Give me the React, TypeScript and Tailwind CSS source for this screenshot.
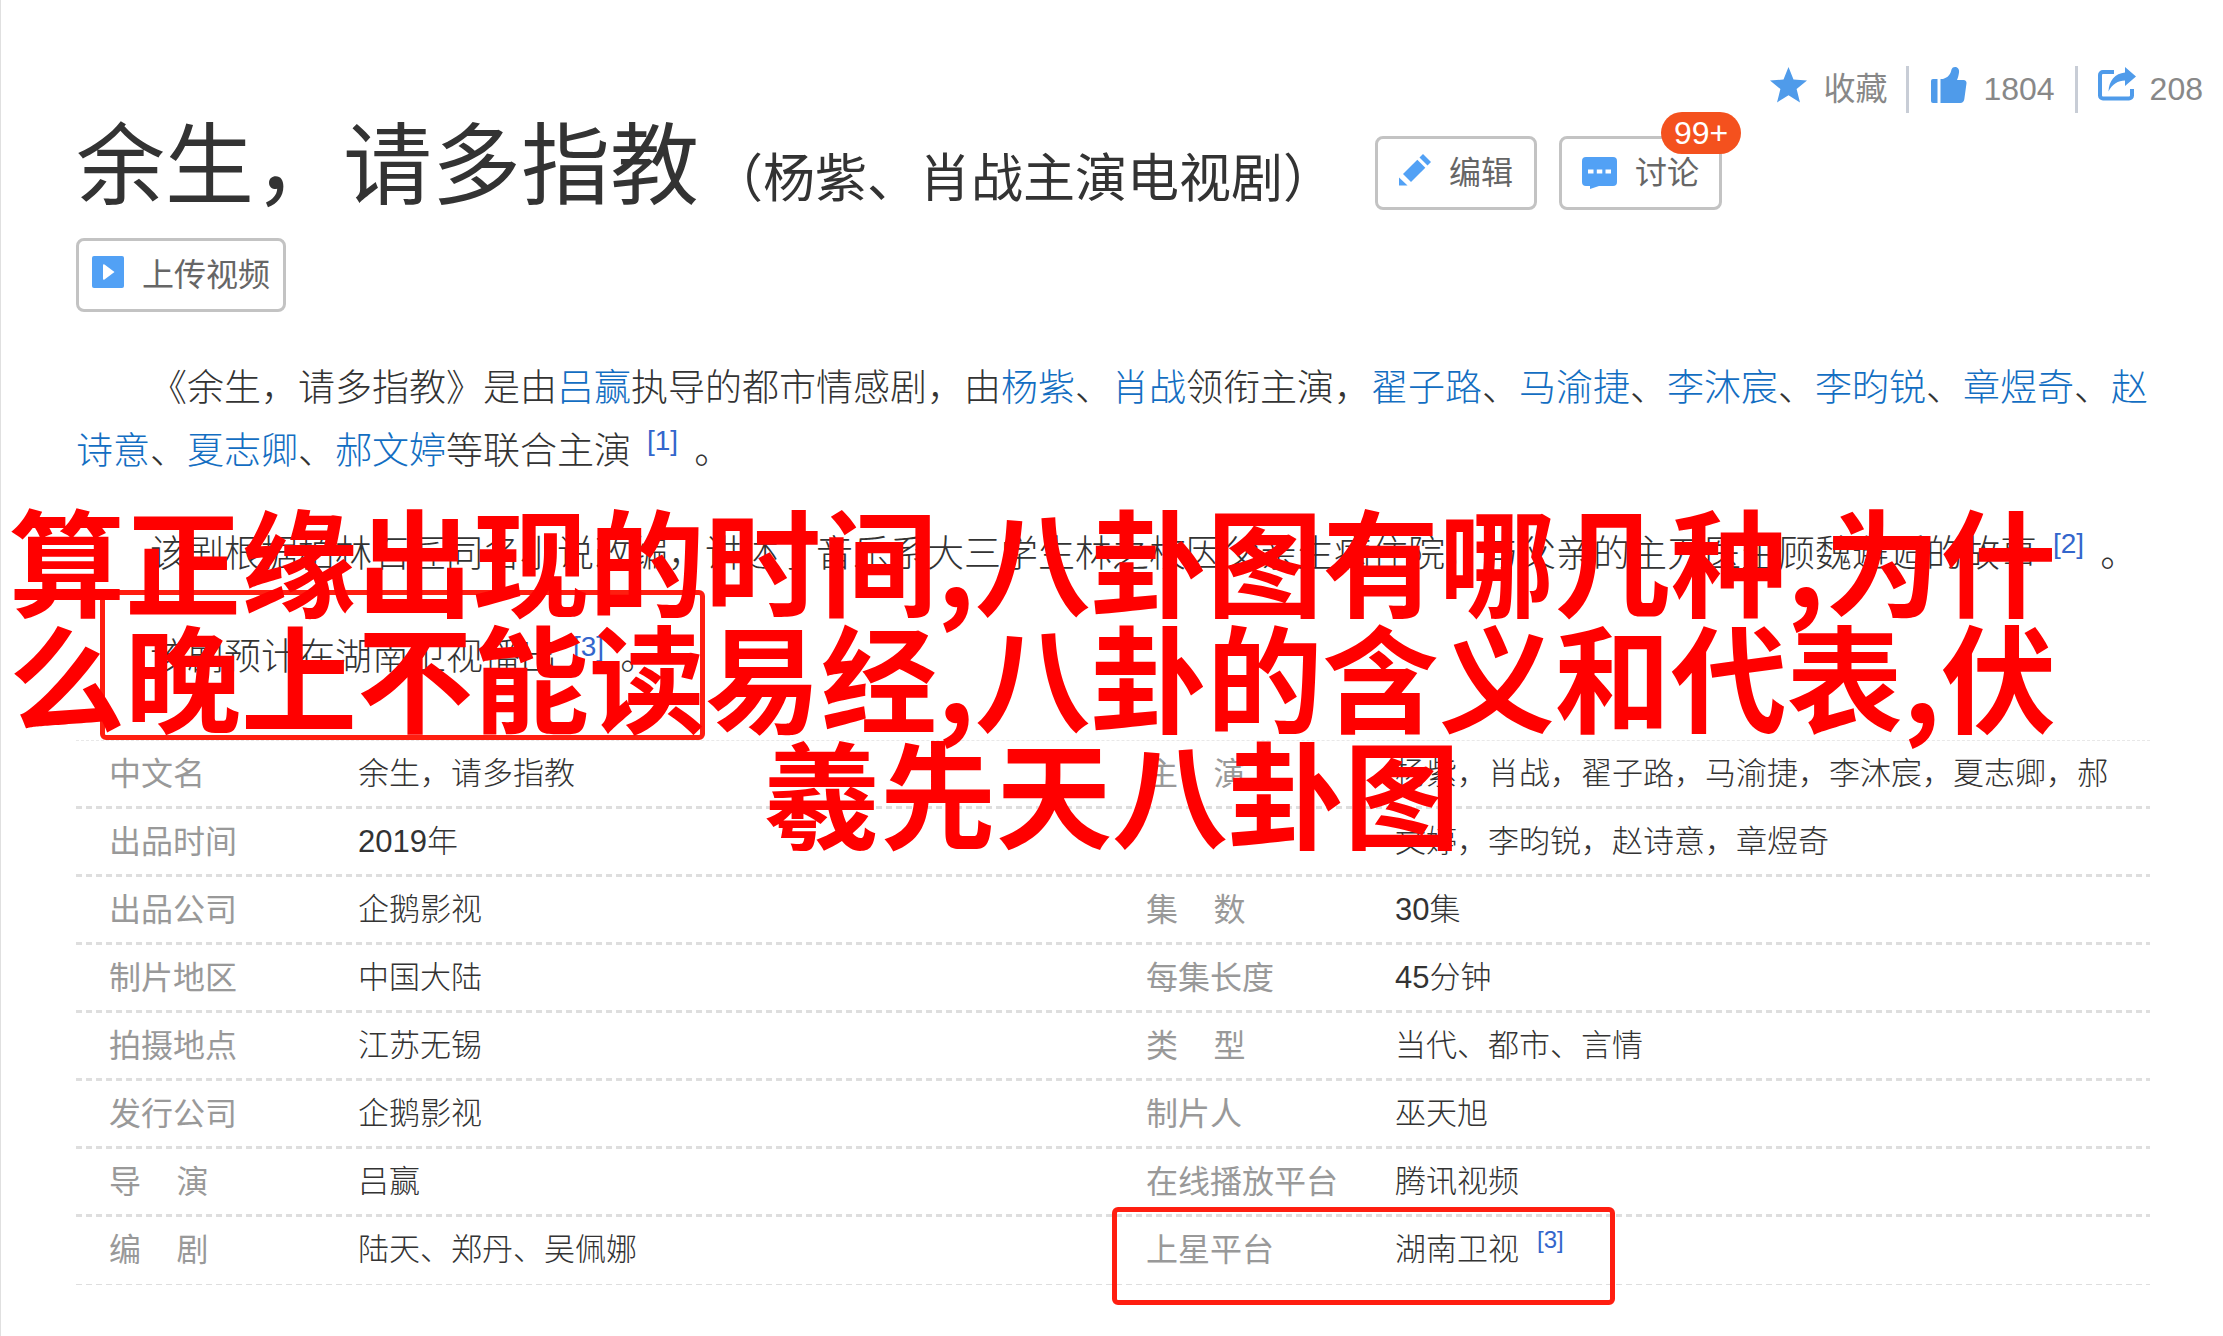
import type { ReactNode } from 'react';

const ROWS = [
  ['中文名', '余生，请多指教', '主\u00a0\u00a0\u00a0\u00a0演', '杨紫，肖战，翟子路，马渝捷，李沐宸，夏志卿，郝'],
  ['出品时间', '2019年', '', '文婷，李昀锐，赵诗意，章煜奇'],
  ['出品公司', '企鹅影视', '集\u00a0\u00a0\u00a0\u00a0数', '30集'],
  ['制片地区', '中国大陆', '每集长度', '45分钟'],
  ['拍摄地点', '江苏无锡', '类\u00a0\u00a0\u00a0\u00a0型', '当代、都市、言情'],
  ['发行公司', '企鹅影视', '制片人', '巫天旭'],
  ['导\u00a0\u00a0\u00a0\u00a0演', '吕赢', '在线播放平台', '腾讯视频'],
  ['编\u00a0\u00a0\u00a0\u00a0剧', '陆天、郑丹、吴佩娜', '上星平台', '湖南卫视'],
];

export default function App() {
  return (
    <div className="relative min-h-screen overflow-hidden border-l border-[#e0e0e0] bg-white pb-10 font-['Liberation_Sans','Noto_Sans_CJK_SC',sans-serif] text-[#333]">
      <Tools />

      <header className="mt-[9px] flex flex-wrap items-end gap-y-7 pl-[75px]">
        <h1 className="text-[89px] leading-[88px]">余生，请多指教</h1>
        <h2 className="ml-3 text-[52px] leading-[62px]">（杨紫、肖战主演电视剧）</h2>
        <ActionButton icon={<PencilIcon />} label="编辑" className="ml-10 gap-[18px] px-[21px]" />
        <div className="relative ml-[22px]">
          <ActionButton icon={<ChatIcon />} label="讨论" className="gap-[18px] px-5" />
          <span className="absolute -top-6 left-[102px] h-[42px] w-20 rounded-full bg-[#f4511e] text-center text-[32px] leading-[42px] text-white">
            99+
          </span>
        </div>
        <div className="w-full">
          <ActionButton icon={<PlayIcon />} label="上传视频" className="gap-[18px] px-[13px]" />
        </div>
      </header>

      <main className="pr-[73px] pl-[75px]">
        <Summary />
        <InfoTable />
      </main>

      <Overlay />
    </div>
  );
}

function Tools() {
  return (
    <nav className="flex items-center justify-end pt-[66px] pr-5 text-[32px] leading-[47px] text-[#888]">
      <button className="flex items-center gap-4">
        <StarIcon />
        收藏
      </button>
      <span className="mr-[22px] ml-[19px] h-[47px] w-[3px] bg-[#c8cdd6]" />
      <button className="flex items-center gap-4">
        <ThumbIcon />
        1804
      </button>
      <span className="mx-5 h-[47px] w-[3px] bg-[#c8cdd6]" />
      <button className="flex items-center gap-[14px]">
        <ShareIcon />
        208
      </button>
    </nav>
  );
}

function ActionButton({ icon, label, className }: { icon: ReactNode; label: string; className: string }) {
  return (
    <button
      className={`flex h-[74px] items-center rounded-lg border-3 border-[#c3c3c3] text-[32px] leading-[68px] whitespace-nowrap text-[#666] ${className}`}
    >
      {icon}
      {label}
    </button>
  );
}

function Name({ children }: { children: ReactNode }) {
  return (
    <a href="#" className="text-[#136ec2]">
      {children}
    </a>
  );
}

function Cite({ n }: { n: number }) {
  return (
    <sup className="mx-4 text-[28px] leading-none">
      <a href="#" className="text-[#3366cc]">
        [{n}]
      </a>
    </sup>
  );
}

function Summary() {
  return (
    <section className="relative mt-[45px] flex flex-col gap-10 text-[37px] leading-[63px] font-light">
      <p className="indent-[2em]">
        《余生，请多指教》是由<Name>吕赢</Name>执导的都市情感剧，由<Name>杨紫</Name>、<Name>肖战</Name>领衔主演，
        <Name>翟子路</Name>、<Name>马渝捷</Name>、<Name>李沐宸</Name>、<Name>李昀锐</Name>、<Name>章煜奇</Name>、
        <Name>赵诗意</Name>、<Name>夏志卿</Name>、<Name>郝文婷</Name>等联合主演
        <Cite n={1} />。
      </p>
      <p className="indent-[2em]">
        该剧根据柏林石匠同名小说改编，讲述了音乐系大三学生林之校因父亲生病住院，与父亲的主刀医生顾魏邂逅的故事
        <Cite n={2} />。
      </p>
      <p className="indent-[2em]">
        该剧预计在湖南卫视播出
        <Cite n={3} />。
      </p>
      <div className="absolute top-[233px] left-6 h-[150px] w-[605px] rounded-md border-5 border-[#ff1e10]" />
    </section>
  );
}

function InfoTable() {
  return (
    <div className="relative mt-[51px]">
      <table className="block">
        <tbody className="block border-t border-dashed border-[#e8e8e8]">
          {ROWS.map(([label, value, label2, value2]) => (
            <tr
              key={label}
              className="grid h-[68px] grid-cols-[282px_1fr_282px_1fr] bg-[repeating-linear-gradient(90deg,#dedede_0_6px,transparent_6px_10px)] bg-[length:100%_3px] bg-bottom bg-no-repeat text-left text-[31px] leading-[66px] whitespace-nowrap last:bg-[length:100%_1px]"
            >
              <Label>{label}</Label>
              <td className="font-light">{value}</td>
              <Label>{label2}</Label>
              <td className="font-light">
                {value2}
                {label2 === '上星平台' && (
                  <sup className="ml-[18px] text-[24px] leading-none">
                    <a href="#" className="text-[#3366cc]">
                      [3]
                    </a>
                  </sup>
                )}
              </td>
            </tr>
          ))}
        </tbody>
      </table>
      <div className="absolute top-[467px] left-1/2 -ml-px h-[98px] w-[503px] rounded-md border-5 border-[#ff1e10]" />
    </div>
  );
}

function Label({ children }: { children: ReactNode }) {
  return <th className="pl-[33px] text-[32px] font-normal text-[#999]">{children}</th>;
}

function Overlay() {
  return (
    <div className="pointer-events-none absolute inset-x-0 top-[499px] font-['Noto_Sans_CJK_SC',sans-serif] text-[116px] leading-[116px] font-bold whitespace-nowrap text-[#f00]">
      <p className="pl-2">算正缘出现的时间,八卦图有哪几种,为什</p>
      <p className="pl-2">么晚上不能读易经,八卦的含义和代表,伏</p>
      <p className="text-center">羲先天八卦图</p>
    </div>
  );
}

function StarIcon() {
  return (
    <svg width="37" height="36" viewBox="0 0 37 36" fill="#4f9bea" className="mb-[10px]">
      <path d="M18.5 0l5 12.6 13.5.9-10.4 8.6L30 35.5 18.5 28.300 7 35.500l3.400-13.400L0 13.500l13.500-.9z" />
    </svg>
  );
}

function ThumbIcon() {
  return (
    <svg width="36" height="36" viewBox="0 0 36 36" fill="#4f9bea" className="mb-[10px]">
      <path d="M2 12h4.500v24H2a2 2 0 0 1-2-2V14a2 2 0 0 1 2-2z" />
      <path d="M9.500 12H12c5-1.500 7.500-4.500 8.500-9.500C21 .8 22.500 0 24 0c3 0 4.500 2.500 4 5.500-.4 3-1 5-2 7.500h6.500c2 0 3.300 1.300 3 3.300l-2.200 16c-.3 2.200-1.800 3.700-4 3.700H9.500z" />
    </svg>
  );
}

function ShareIcon() {
  return (
    <svg width="38" height="34" viewBox="0 0 38 34" fill="none" className="mb-[12px]">
      <path d="M16 5H5a3 3 0 0 0-3 3v20.500a3 3 0 0 0 3 3h26a3 3 0 0 0 3-3V22" stroke="#4f9bea" strokeWidth="4" />
      <path d="M27 0l11 9.500L27 19v-5.500c-7 0-12.500 3.500-16.500 11C11 13.500 17 6.500 27 5.500z" fill="#4f9bea" />
    </svg>
  );
}

function PencilIcon() {
  return (
    <svg width="32" height="32" viewBox="0 0 32 32" fill="#52a1f5" className="mb-[6px]">
      <path d="M24 0l8 8-3.500 3.500-8-8z" />
      <path d="M18.300 5.800l8 8L12 28 4 20z" />
      <path d="M0 23.500L8.500 31.500H0z" />
    </svg>
  );
}

function ChatIcon() {
  return (
    <svg width="35" height="32" viewBox="0 0 35 32" fill="#52a1f5">
      <path d="M4 0h27a4 4 0 0 1 4 4v21a4 4 0 0 1-4 4H17l-9 3V29H4a4 4 0 0 1-4-4V4a4 4 0 0 1 4-4z" />
      <path d="M6 12.500h5.500v4H6zM14.800 12.500h5.500v4h-5.500zM23.500 12.500H29v4h-5.500z" fill="#fff" />
    </svg>
  );
}

function PlayIcon() {
  return (
    <svg width="32" height="32" viewBox="0 0 32 32" fill="#52a1f5" className="mb-[6px]">
      <rect width="32" height="32" rx="2" />
      <path d="M11 9.500q0-2 1.500-1l10 7.500-10 7.500q-1.500 1-1.500-1z" fill="#fff" />
    </svg>
  );
}
